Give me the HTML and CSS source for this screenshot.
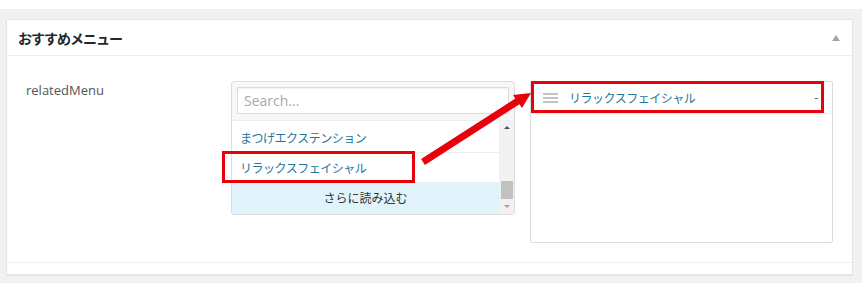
FILE: index.html
```html
<!DOCTYPE html>
<html lang="ja">
<head>
  <meta charset="UTF-8" />
  <title>おすすめメニュー</title>
  <link rel="stylesheet" href="styles.css">
</head>
<body>
  <div class="topbar"></div>
  <div class="wrap">
    <div class="panel">
      <div class="panel-head">
        <h2>おすすめメニュー</h2>
        <span class="toggle"></span>
      </div>

      <div class="panel-body">
        <div class="label">relatedMenu</div>

        <!-- 選択元 -->
        <div class="picker">
          <div class="search-wrap">
            <input class="search" type="text" placeholder="Search...">
          </div>
          <div class="list-wrap">
            <ul class="list">
              <li>まつげエクステンション</li>
              <li>リラックスフェイシャル</li>
              <li class="more">さらに読み込む</li>
            </ul>
            <div class="scrollbar">
              <span class="arrow up"></span>
              <span class="thumb"></span>
              <span class="arrow down"></span>
            </div>
          </div>
        </div>

        <!-- 選択済み -->
        <div class="selected">
          <div class="sel-item">
            <span class="handle"><i></i><i></i><i></i></span>
            <span class="sel-text">リラックスフェイシャル</span>
            <span class="remove">-</span>
          </div>
        </div>

        <!-- 注釈 -->
        <div class="mark mark-left"></div>
        <div class="mark mark-right"></div>
        <svg class="pointer" width="540" height="120" viewBox="0 0 540 120">
          <line x1="416" y1="106" x2="511" y2="45" stroke="#e8000b" stroke-width="7" />
          <polygon points="524,37 515,52 506,39" fill="#e8000b" />
        </svg>
      </div>

      <div class="panel-foot"></div>
    </div>
  </div>
</body>
</html>
```

FILE: styles.css
```css
:root {
  --bg: #f1f1f1;
  --border: #e5e5e5;
  --link: #21759b;
  --red: #e8000b;
}

* {
  box-sizing: border-box;
  margin: 0;
  padding: 0;
}

body {
  background-color: var(--bg);
  font-family: "Open Sans", "Noto Sans CJK JP", sans-serif;
  font-size: 13px;
  color: #444;
}

.topbar {
  height: 9px;
  background: #fff;
}

.wrap {
  padding: 10px 9px 8px 6px;
}

.panel {
  background: #fff;
  border: 1px solid var(--border);
  box-shadow: 0 1px 1px rgba(0, 0, 0, 0.04);
}

.panel-head {
  height: 36px;
  border-bottom: 1px solid #eee;
  display: flex;
  align-items: center;
  justify-content: space-between;
  padding: 0 12px 0 11px;
}

.panel-head h2 {
  font-family: "Noto Sans CJK JP", sans-serif;
  font-size: 14px;
  font-weight: 700;
  color: #23282d;
  letter-spacing: -1px;
}

.toggle {
  width: 0;
  height: 0;
  border-left: 4px solid transparent;
  border-right: 4px solid transparent;
  border-bottom: 6px solid #a0a5aa;
  margin-top: 1px;
}

.panel-body {
  position: relative;
  display: flex;
  align-items: flex-start;
  padding: 25px 19px 19px 19px;
}

.label {
  width: 205px;
  line-height: 18px;
  color: #555;
}

.picker {
  width: 284px;
  border: 1px solid #ddd;
  border-radius: 3px;
  background: #f7f7f7;
  overflow: hidden;
}

.search-wrap {
  padding: 5px 5px 6px;
}

.search {
  display: block;
  width: 100%;
  height: 27px;
  border: 1px solid #ddd;
  background: #fff;
  padding: 0 6px;
  font-family: "Open Sans", sans-serif;
  font-size: 14px;
  color: #333;
  box-shadow: inset 0 1px 2px rgba(0, 0, 0, 0.07);
  outline: none;
}

.search::placeholder {
  color: #a9a9a9;
}

.list-wrap {
  display: flex;
  border-top: 1px solid #eee;
  background: #fff;
}

.list {
  flex: 1;
  list-style: none;
  padding-top: 2px;
}

.list li {
  height: 30px;
  line-height: 29px;
  padding-left: 8px;
  font-family: "Noto Sans CJK JP", sans-serif;
  font-size: 12px;
  color: var(--link);
  border-bottom: 1px solid #eee;
  letter-spacing: -0.5px;
}

.list li.more {
  height: 31px;
  line-height: 30px;
  padding-left: 0;
  text-align: center;
  color: #333;
  background: #e1f3fb;
  border-bottom: none;
  letter-spacing: 0;
}

.scrollbar {
  width: 15px;
  background: #f1f1f1;
  display: flex;
  flex-direction: column;
  align-items: center;
  padding: 5px 0 6px;
}

.arrow {
  width: 0;
  height: 0;
  border-left: 3px solid transparent;
  border-right: 3px solid transparent;
}

.arrow.up {
  border-bottom: 3px solid #505050;
}

.arrow.down {
  border-top: 3px solid #a3a3a3;
  margin-top: 6px;
}

.thumb {
  width: 12px;
  height: 18px;
  background: #c1c1c1;
  margin-top: auto;
}

.selected {
  width: 303px;
  height: 162px;
  margin-left: 15px;
  border: 1px solid #ddd;
  border-radius: 2px;
  background: #fff;
}

.sel-item {
  height: 32px;
  display: flex;
  align-items: center;
  border-bottom: 1px solid #eee;
  padding: 0 14px 0 12px;
}

.handle {
  width: 15px;
  display: flex;
  flex-direction: column;
  gap: 2px;
  margin-right: 11px;
}

.handle i {
  display: block;
  height: 2px;
  background: #c3c3c3;
}

.sel-text {
  flex: 1;
  font-family: "Noto Sans CJK JP", sans-serif;
  font-size: 12px;
  color: var(--link);
  letter-spacing: -0.5px;
}

.remove {
  color: #555;
  font-size: 12px;
}

/* 注釈の赤枠と矢印 */
.mark {
  position: absolute;
  border: 3px solid var(--red);
  height: 32px;
}

.mark-left {
  left: 215px;
  top: 95px;
  width: 193px;
}

.mark-right {
  left: 524px;
  top: 25px;
  width: 293px;
}

.pointer {
  position: absolute;
  left: 0;
  top: 0;
}

.panel-foot {
  height: 12px;
  border-top: 1px solid #eee;
}
```
